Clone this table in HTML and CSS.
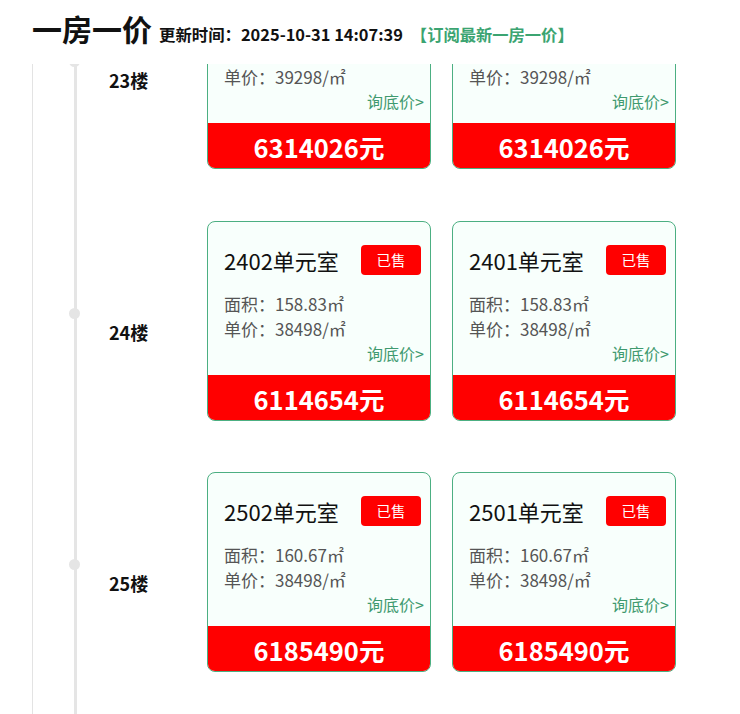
FILE: index.html
```html
<!DOCTYPE html>
<html lang="zh">
<head>
<meta charset="utf-8">
<title>一房一价</title>
<link rel="stylesheet" href="styles.css">
</head>
<body>
<header class="header">
  <h1 class="title">一房一价</h1>
  <span class="update">更新时间：2025-10-31 14:07:39</span>
  <a class="subscribe">【订阅最新一房一价】</a>
</header>
<div class="viewport">
  <div class="wrap">
    <div class="timeline">
      <div class="list">
        <div class="row">
          <span class="dot"></span>
          <div class="floor">23楼</div>
          <div class="cards">
            <div class="card">
              <div class="head"><span class="room">2302单元室</span><span class="badge">已售</span></div>
              <div class="info">面积：160.67㎡</div>
              <div class="info">单价：39298/㎡</div>
              <div class="ask">询底价&gt;</div>
              <div class="price">6314026元</div>
            </div>
            <div class="card">
              <div class="head"><span class="room">2301单元室</span><span class="badge">已售</span></div>
              <div class="info">面积：160.67㎡</div>
              <div class="info">单价：39298/㎡</div>
              <div class="ask">询底价&gt;</div>
              <div class="price">6314026元</div>
            </div>
          </div>
        </div>
        <div class="row">
          <span class="dot"></span>
          <div class="floor">24楼</div>
          <div class="cards">
            <div class="card">
              <div class="head"><span class="room">2402单元室</span><span class="badge">已售</span></div>
              <div class="info">面积：158.83㎡</div>
              <div class="info">单价：38498/㎡</div>
              <div class="ask">询底价&gt;</div>
              <div class="price">6114654元</div>
            </div>
            <div class="card">
              <div class="head"><span class="room">2401单元室</span><span class="badge">已售</span></div>
              <div class="info">面积：158.83㎡</div>
              <div class="info">单价：38498/㎡</div>
              <div class="ask">询底价&gt;</div>
              <div class="price">6114654元</div>
            </div>
          </div>
        </div>
        <div class="row">
          <span class="dot"></span>
          <div class="floor">25楼</div>
          <div class="cards">
            <div class="card">
              <div class="head"><span class="room">2502单元室</span><span class="badge">已售</span></div>
              <div class="info">面积：160.67㎡</div>
              <div class="info">单价：38498/㎡</div>
              <div class="ask">询底价&gt;</div>
              <div class="price">6185490元</div>
            </div>
            <div class="card">
              <div class="head"><span class="room">2501单元室</span><span class="badge">已售</span></div>
              <div class="info">面积：160.67㎡</div>
              <div class="info">单价：38498/㎡</div>
              <div class="ask">询底价&gt;</div>
              <div class="price">6185490元</div>
            </div>
          </div>
        </div>
      </div>
    </div>
  </div>
</div>
</body>
</html>
```

FILE: styles.css
```css
* { box-sizing: border-box; }
html, body {
  margin: 0;
  padding: 0;
  background: #fff;
  font-family: "Noto Sans CJK SC", "Noto Sans", sans-serif;
  color: #111;
}
.header {
  height: 64px;
  padding-left: 32px;
  padding-top: 6px;
  display: flex;
  align-items: baseline;
  background: #fff;
}
.title {
  margin: 0;
  font-size: 30px;
  font-weight: 700;
  line-height: 44px;
  color: #111;
}
.update {
  margin-left: 7px;
  font-size: 16.4px;
  font-weight: 700;
  color: #111;
}
.subscribe {
  margin-left: 8px;
  font-size: 16.3px;
  font-weight: 700;
  color: #3ba471;
}
.viewport {
  height: 650px;
  overflow: hidden;
}
.wrap {
  margin-left: 32px;
  border-left: 1px solid #e3e3e3;
  height: 100%;
  display: flow-root;
}
.timeline {
  margin-left: 41px;
  border-left: 3px solid #e5e5e5;
  height: 100%;
  display: flow-root;
}
.list {
  margin-top: -95px;
}
.row {
  position: relative;
  display: flex;
  align-items: flex-start;
  height: 251px;
}
.row:first-child {
  height: 252px;
}
.dot {
  position: absolute;
  left: -8px;
  top: 87px;
  width: 11px;
  height: 11px;
  border-radius: 50%;
  background: #e5e5e5;
}
.floor {
  width: 130px;
  padding-left: 32px;
  padding-top: 98px;
  font-size: 18px;
  font-weight: 700;
  line-height: 26px;
  color: #111;
}
.cards {
  display: flex;
  gap: 21px;
}
.card {
  width: 224px;
  height: 200px;
  border: 1px solid #4caf82;
  border-radius: 8px;
  background: #f8fffc;
  overflow: hidden;
  display: flex;
  flex-direction: column;
  padding-top: 22px;
}
.head {
  display: flex;
  justify-content: space-between;
  align-items: center;
  height: 32px;
  padding-left: 16px;
  padding-right: 9px;
}
.room {
  font-size: 22px;
  line-height: 30px;
  color: #111;
}
.badge {
  width: 60px;
  height: 30px;
  border-radius: 4px;
  background: #ff0000;
  color: #fff;
  font-size: 14.5px;
  line-height: 30px;
  text-align: center;
}
.info {
  padding-left: 16px;
  font-size: 17px;
  line-height: 25px;
  color: #555;
}
.head + .info {
  margin-top: 15px;
}
.ask {
  text-align: right;
  padding-right: 6px;
  font-size: 16px;
  line-height: 25px;
  color: #3f9a6f;
}
.price {
  margin-top: auto;
  height: 45px;
  background: #ff0000;
  color: #fff;
  text-align: center;
  font-size: 25.5px;
  font-weight: 700;
  line-height: 48px;
}
```
